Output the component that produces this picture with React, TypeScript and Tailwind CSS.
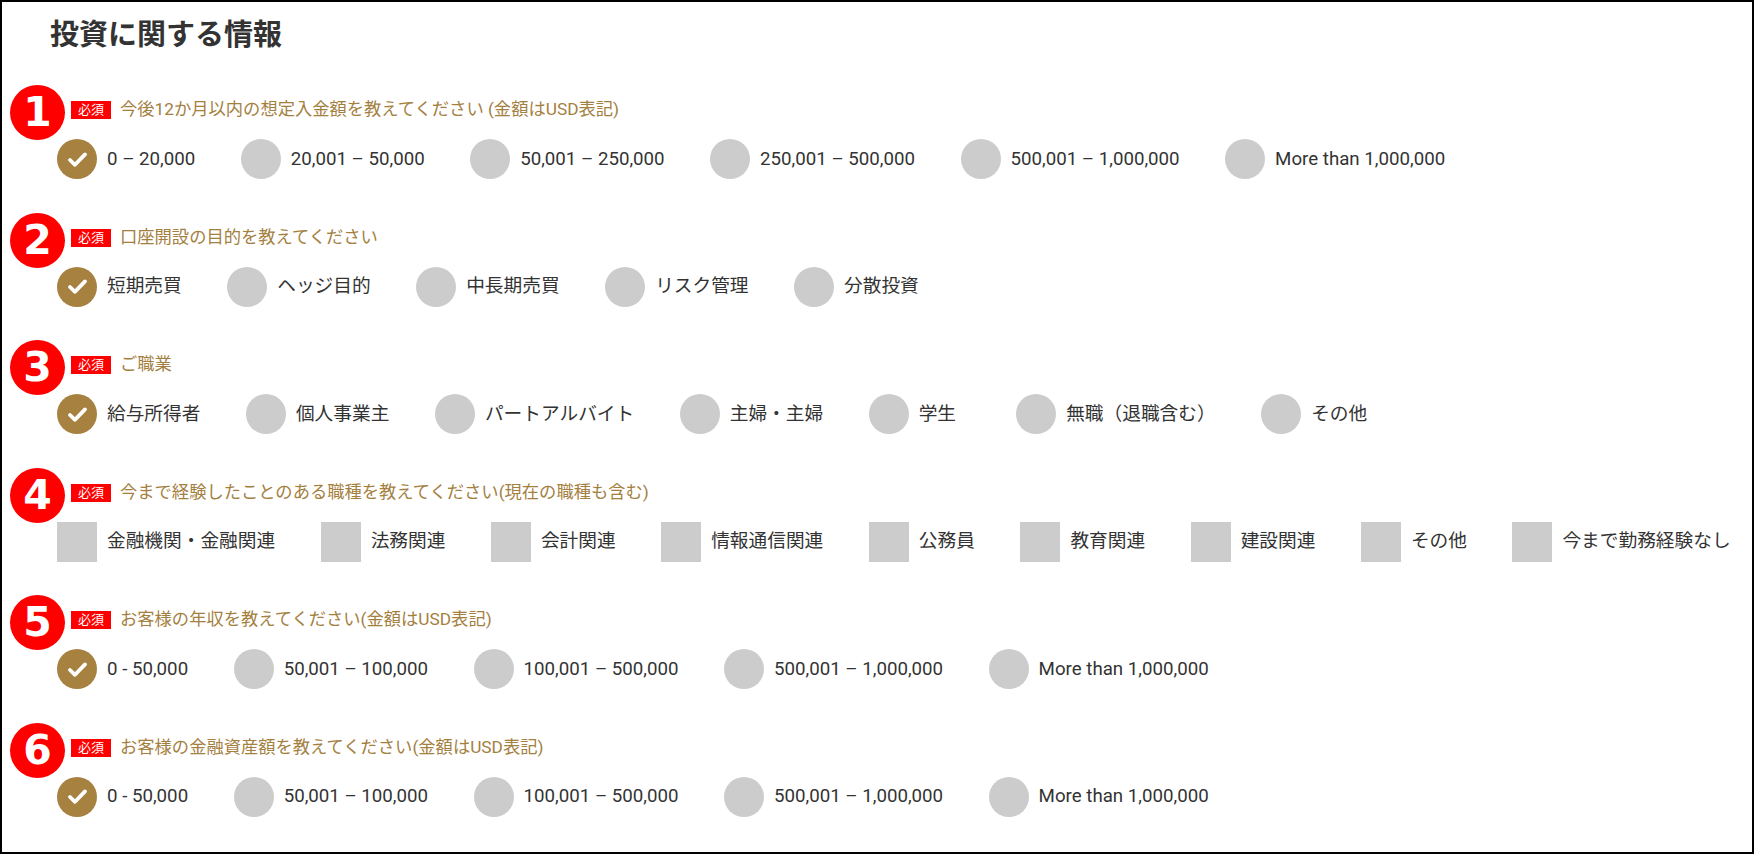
import React from 'react';

type Section = {
  no: number;
  label: string;
  type: 'radio' | 'check';
  options: string[];
};

const sections: Section[] = [
  {
    no: 1,
    label: '今後12か月以内の想定入金額を教えてください (金額はUSD表記)',
    type: 'radio',
    options: ['0 – 20,000', '20,001 – 50,000', '50,001 – 250,000', '250,001 – 500,000', '500,001 – 1,000,000', 'More than 1,000,000'],
  },
  {
    no: 2,
    label: '口座開設の目的を教えてください',
    type: 'radio',
    options: ['短期売買', 'ヘッジ目的', '中長期売買', 'リスク管理', '分散投資'],
  },
  {
    no: 3,
    label: 'ご職業',
    type: 'radio',
    options: ['給与所得者', '個人事業主', 'パートアルバイト', '主婦・主婦', '学生', '無職（退職含む）', 'その他'],
  },
  {
    no: 4,
    label: '今まで経験したことのある職種を教えてください(現在の職種も含む)',
    type: 'check',
    options: ['金融機関・金融関連', '法務関連', '会計関連', '情報通信関連', '公務員', '教育関連', '建設関連', 'その他', '今まで勤務経験なし'],
  },
  {
    no: 5,
    label: 'お客様の年収を教えてください(金額はUSD表記)',
    type: 'radio',
    options: ['0 - 50,000', '50,001 – 100,000', '100,001 – 500,000', '500,001 – 1,000,000', 'More than 1,000,000'],
  },
  {
    no: 6,
    label: 'お客様の金融資産額を教えてください(金額はUSD表記)',
    type: 'radio',
    options: ['0 - 50,000', '50,001 – 100,000', '100,001 – 500,000', '500,001 – 1,000,000', 'More than 1,000,000'],
  },
];

const Check = () => (
  <svg width="21" height="17" viewBox="0 0 21 17" fill="none">
    <path d="M3 9l5 4.8L18 3.4" stroke="#fff" strokeWidth="3.8" strokeLinecap="round" strokeLinejoin="round" />
  </svg>
);

const Option = ({ text, type, checked }: { text: string; type: 'radio' | 'check'; checked: boolean }) => (
  <label className="flex items-center mr-[45.5px] shrink-0">
    {type === 'radio' ? (
      <span
        className={
          checked
            ? 'w-10 h-10 rounded-full bg-[#a6813f] flex items-center justify-center'
            : 'w-10 h-10 rounded-full bg-[#cccccc]'
        }
      >
        {checked && <Check />}
      </span>
    ) : (
      <span className="w-10 h-10 bg-[#cccccc]" />
    )}
    <span className="ml-[10px] min-w-[52px] text-[18.7px] text-[#333333] whitespace-nowrap">{text}</span>
  </label>
);

export default function App() {
  return (
    <div
      className="h-screen w-full border-2 border-black bg-white overflow-hidden"
      style={{ fontFamily: 'Roboto, "Noto Sans CJK JP", sans-serif' }}
    >
      <h2 className="pl-[48px] pt-[13px] text-[29px] leading-[40px] font-bold text-[#333333]">投資に関する情報</h2>

      <div className="mt-[43px] flex flex-col gap-[46.5px]">
        {sections.map((s) => (
          <div key={s.no} className="relative pl-[55px]">
            {/* number marker */}
            <div className="absolute left-[8px] top-[-13px] w-[55px] h-[55px] rounded-full bg-[#ff0000] flex items-center justify-center">
              <span
                className="text-white text-[41px] font-bold leading-none"
                style={{ fontFamily: '"DejaVu Sans", sans-serif' }}
              >
                {s.no}
              </span>
            </div>

            <div className="relative flex items-center h-6 pl-[14px]">
              <span className="w-10 h-[18px] bg-[#ff0000] text-white text-[13px] leading-[18px] text-center">必須</span>
              <span className="ml-[9px] text-[17.3px] text-[#a4803f] whitespace-nowrap">{s.label}</span>
            </div>

            <div className="mt-[17px] flex items-center h-10">
              {s.options.map((o, i) => (
                <Option key={o} text={o} type={s.type} checked={s.type === 'radio' && i === 0} />
              ))}
            </div>
          </div>
        ))}
      </div>
    </div>
  );
}
